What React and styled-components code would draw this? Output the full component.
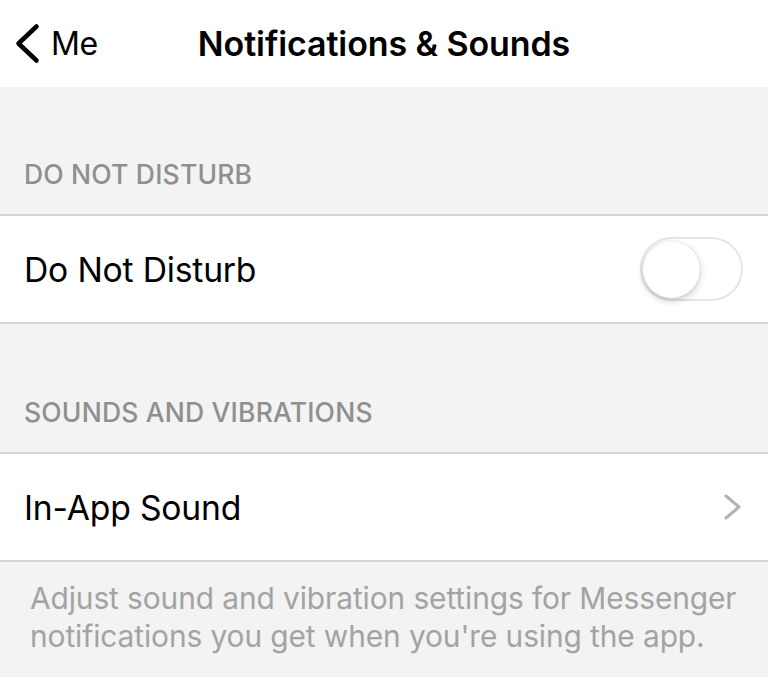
import React from "react";
import styled, { createGlobalStyle } from "styled-components";

const Global = createGlobalStyle`
  html, body { margin: 0; padding: 0; background: #f3f3f3; }
  body { font-family: Inter, "Liberation Sans", sans-serif; -webkit-font-smoothing: antialiased; }
`;

const Page = styled.div`
  width: 768px;
  height: 677px;
  background: #f3f3f3;
  overflow: hidden;
`;

const NavBar = styled.header`
  height: 87px;
  background: #fff;
  display: grid;
  grid-template-columns: 1fr auto 1fr;
  align-items: center;
`;

const Back = styled.div`
  display: flex;
  align-items: center;
  gap: 10px;
  padding-left: 14px;
  font-size: 32px;
  color: #000;
  letter-spacing: -0.3px;
`;

const Title = styled.h1`
  margin: 0;
  font-size: 34px;
  font-weight: 600;
  color: #000;
  letter-spacing: -0.1px;
  transform: translateX(0px);
`;

const SectionHeader = styled.div`
  height: ${(p) => p.$h}px;
  box-sizing: border-box;
  display: flex;
  align-items: flex-end;
  padding: 0 24px 24px;
  font-size: 26.5px;
  font-weight: 500;
  color: #8f8f8f;
  letter-spacing: 0.2px;
  border-bottom: 2px solid #d6d6d6;
`;

const Row = styled.div`
  height: 108px;
  box-sizing: border-box;
  background: #fff;
  display: flex;
  align-items: center;
  justify-content: space-between;
  padding: 0 26px 0 24px;
  font-size: 33.7px;
  color: #000;
  border-bottom: 2px solid #d6d6d6;
  letter-spacing: -0.2px;
`;

const Toggle = styled.div`
  width: 103px;
  height: 64px;
  box-sizing: border-box;
  border-radius: 32px;
  border: 2px solid #e6e6e6;
  background: #fff;
  display: flex;
  align-items: center;
  padding: 1px;
  margin-right: -1px;
`;

const Knob = styled.div`
  width: 57px;
  height: 57px;
  border-radius: 50%;
  background: #fff;
  box-shadow: 0 3px 7px rgba(0, 0, 0, 0.2), 0 0 1px rgba(0, 0, 0, 0.25);
`;

const Footer = styled.p`
  margin: 0;
  padding: 17px 20px 0 30px;
  font-size: 29.9px;
  line-height: 38px;
  color: #a3a3a3;
  letter-spacing: -0.1px;
`;

const Chevron = ({ dir, color, w, h, sw }) => (
  <svg width={w} height={h} viewBox={`0 0 ${w} ${h}`} fill="none">
    {dir === "left" ? (
      <polyline
        points={`${w - sw},${sw} ${sw},${h / 2} ${w - sw},${h - sw}`}
        stroke={color}
        strokeWidth={sw}
        strokeLinecap="round"
        strokeLinejoin="round"
      />
    ) : (
      <polyline
        points={`${sw},${sw} ${w - sw},${h / 2} ${sw},${h - sw}`}
        stroke={color}
        strokeWidth={sw}
        strokeLinecap="round"
        strokeLinejoin="round"
      />
    )}
  </svg>
);

export default function App() {
  return (
    <Page>
      <Global />
      <NavBar>
        <Back>
          <Chevron dir="left" color="#000" w={27} h={43} sw={4.5} />
          Me
        </Back>
        <Title>Notifications &amp; Sounds</Title>
        <div />
      </NavBar>
      <SectionHeader $h={129}>DO NOT DISTURB</SectionHeader>
      <Row>
        Do Not Disturb
        <Toggle>
          <Knob />
        </Toggle>
      </Row>
      <SectionHeader $h={130}>SOUNDS AND VIBRATIONS</SectionHeader>
      <Row>
        In-App Sound
        <Chevron dir="right" color="#b3b3b3" w={19} h={28} sw={3} />
      </Row>
      <Footer>
        Adjust sound and vibration settings for Messenger notifications you get
        when you're using the app.
      </Footer>
    </Page>
  );
}
